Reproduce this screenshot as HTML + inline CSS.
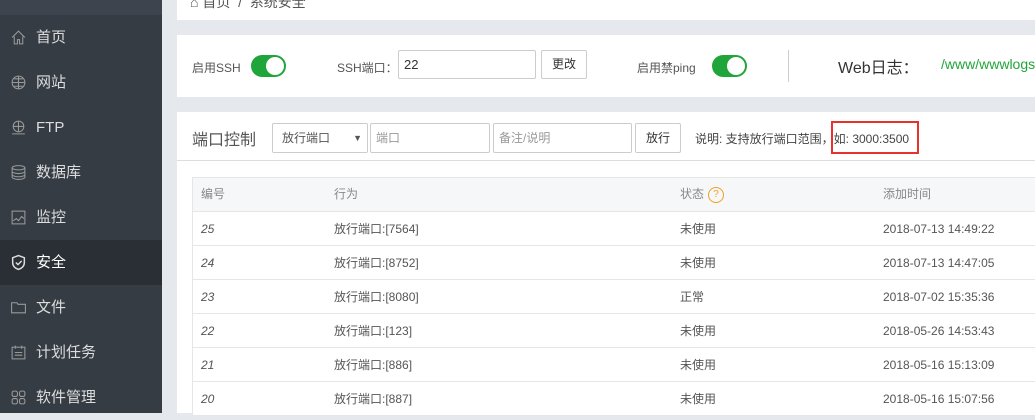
<!DOCTYPE html>
<html><head><meta charset="utf-8"><style>
*{margin:0;padding:0;box-sizing:border-box}
body{width:1035px;height:413px;overflow:hidden;background:#e5e8ec;font-family:"Liberation Sans","Noto Sans CJK SC",sans-serif;position:relative;color:#333}
.abs{position:absolute}
#side{left:0;top:0;width:162px;height:413px;background:#353c44}
.item{position:absolute;left:0;width:162px;height:45px;color:#ddd;font-size:15px;line-height:45px;padding-left:36px}
.item svg{position:absolute;left:10px;top:14px}
.white{background:#fff}
.tog{position:absolute;width:35px;height:22px;border-radius:11px;background:#20a53a}
.tog::after{content:"";position:absolute;right:2px;top:2px;width:18px;height:18px;border-radius:50%;background:#fff}
.inp{position:absolute;border:1px solid #ccc;border-radius:2px;background:#fff;font-size:12px;color:#999;padding-left:5px}
.btn{position:absolute;border:1px solid #ccc;border-radius:2px;background:#fff;font-size:12px;color:#333;text-align:center}
.t{position:absolute;font-size:12px;white-space:nowrap}
.row{position:absolute;left:192px;width:843px;height:34px;border-bottom:1px solid #e6e6e6;background:#fff;font-size:12px;line-height:34px;color:#555}
.row span{position:absolute}
</style></head><body>
<div id="side" class="abs">
<div class="abs" style="left:0;top:0;width:162px;height:15px;background:#3d444d"></div>
<div class="item" style="top:15px">首页<svg width="17" height="17" viewBox="0 0 16 16" fill="none" stroke="#999"><path d="M2 8L8 2l6 6M4 7v7h3v-4h2v4h3V7"/></svg></div>
<div class="item" style="top:60px">网站<svg width="17" height="17" viewBox="0 0 16 16" fill="none" stroke="#999"><circle cx="8" cy="8" r="6"/><path d="M2 8h12M8 2v12M4 4.5h8M4 11.5h8"/></svg></div>
<div class="item" style="top:105px">FTP<svg width="17" height="17" viewBox="0 0 16 16" fill="none" stroke="#999"><circle cx="8" cy="7" r="5"/><path d="M3 7h10M8 2v10M2 14h12"/></svg></div>
<div class="item" style="top:150px">数据库<svg width="17" height="17" viewBox="0 0 16 16" fill="none" stroke="#999"><ellipse cx="8" cy="3.5" rx="6" ry="2"/><path d="M2 3.5v9c0 1 3 2 6 2s6-1 6-2v-9M2 7c0 1 3 2 6 2s6-1 6-2M2 10c0 1 3 2 6 2s6-1 6-2"/></svg></div>
<div class="item" style="top:195px">监控<svg width="17" height="17" viewBox="0 0 16 16" fill="none" stroke="#999"><rect x="2" y="2" width="12" height="12"/><path d="M3 11l3-2 2 2 3-4 2 2"/></svg></div>
<div class="item" style="top:240px;background:#2a2f35;color:#fff">安全<svg width="17" height="17" viewBox="0 0 16 16" fill="none" stroke="#ddd" stroke-width="1.4"><path d="M8 1.5l5.5 2v4.5c0 3.5-2.5 5.5-5.5 6.5-3-1-5.5-3-5.5-6.5V3.5z"/><path d="M5.5 8l2 2 3.5-3.5"/></svg></div>
<div class="item" style="top:285px">文件<svg width="17" height="17" viewBox="0 0 16 16" fill="none" stroke="#999"><path d="M1.5 3.5h5l1 1.5h7v8h-13z"/></svg></div>
<div class="item" style="top:330px">计划任务<svg width="17" height="17" viewBox="0 0 16 16" fill="none" stroke="#999"><rect x="2" y="3" width="12" height="11"/><path d="M5 1.5v3M11 1.5v3M4.5 8h7M4.5 10.5h7"/></svg></div>
<div class="item" style="top:375px">软件管理<svg width="17" height="17" viewBox="0 0 16 16" fill="none" stroke="#999"><rect x="2" y="2" width="5" height="5" rx="1.5"/><rect x="9" y="2" width="5" height="5" rx="1.5"/><rect x="2" y="9" width="5" height="5" rx="1.5"/><rect x="9" y="9" width="5" height="5" rx="1.5"/></svg></div>
</div>

<div class="abs white" style="left:177px;top:0;width:858px;height:20px"></div>
<div class="t" style="left:190px;top:-8px;font-size:14px;color:#555">⌂ 首页 &nbsp;/&nbsp; 系统安全</div>

<div class="abs white" style="left:177px;top:35px;width:858px;height:62px"></div>
<div class="t" style="left:192px;top:59px;color:#555">启用SSH</div>
<div class="tog" style="left:251px;top:55px"></div>
<div class="t" style="left:337px;top:59px;color:#555">SSH端口：</div>
<div class="inp" style="left:398px;top:50px;width:138px;height:29px;line-height:27px;color:#333;font-size:13px">22</div>
<div class="btn" style="left:541px;top:50px;width:46px;height:29px;line-height:27px">更改</div>
<div class="t" style="left:637px;top:59px;color:#555">启用禁ping</div>
<div class="tog" style="left:712px;top:55px"></div>
<div class="abs" style="left:788px;top:50px;width:1px;height:32px;background:#ccc"></div>
<div class="t" style="left:838px;top:54px;font-size:16px;color:#333">Web日志：</div>
<div class="t" style="left:941px;top:56px;font-size:14px;color:#20a53a">/www/wwwlogs</div>

<div class="abs white" style="left:177px;top:112px;width:858px;height:301px"></div>
<div class="t" style="left:192px;top:126px;font-size:16px;color:#555">端口控制</div>
<div class="inp" style="left:272px;top:123px;width:96px;height:30px;line-height:28px;color:#555;padding-left:9px">放行端口<span style="position:absolute;right:5px;font-size:9px;color:#555">▼</span></div>
<div class="inp" style="left:370px;top:123px;width:120px;height:30px;line-height:28px">端口</div>
<div class="inp" style="left:493px;top:123px;width:139px;height:30px;line-height:28px">备注/说明</div>
<div class="btn" style="left:635px;top:123px;width:46px;height:30px;line-height:28px">放行</div>
<div class="t" style="left:695px;top:130px;color:#444">说明: 支持放行端口范围，如: 3000:3500</div>
<div class="abs" style="left:831px;top:121px;width:88px;height:33px;border:2px solid #e8302d"></div>
<div class="abs" style="left:177px;top:160px;width:858px;height:1px;background:#ddd"></div>

<div class="row" style="top:177px;height:35px;background:#f6f7f9;border-top:1px solid #e6e6e6;border-left:1px solid #e6e6e6;color:#888;line-height:33px">
<span style="left:8px">编号</span><span style="left:141px">行为</span><span style="left:487px">状态</span><span style="left:515px;top:9px;width:16px;height:16px;border:1.5px solid #f0a020;border-radius:50%;color:#f0a020;font-size:10px;line-height:13px;text-align:center">?</span><span style="left:690px">添加时间</span></div>
<div class="row" style="top:212px;border-left:1px solid #e6e6e6"><span style="left:8px;font-style:italic">25</span><span style="left:141px">放行端口:[7564]</span><span style="left:487px">未使用</span><span style="left:690px">2018-07-13 14:49:22</span></div>
<div class="row" style="top:246px;border-left:1px solid #e6e6e6"><span style="left:8px;font-style:italic">24</span><span style="left:141px">放行端口:[8752]</span><span style="left:487px">未使用</span><span style="left:690px">2018-07-13 14:47:05</span></div>
<div class="row" style="top:280px;border-left:1px solid #e6e6e6"><span style="left:8px;font-style:italic">23</span><span style="left:141px">放行端口:[8080]</span><span style="left:487px">正常</span><span style="left:690px">2018-07-02 15:35:36</span></div>
<div class="row" style="top:314px;border-left:1px solid #e6e6e6"><span style="left:8px;font-style:italic">22</span><span style="left:141px">放行端口:[123]</span><span style="left:487px">未使用</span><span style="left:690px">2018-05-26 14:53:43</span></div>
<div class="row" style="top:348px;border-left:1px solid #e6e6e6"><span style="left:8px;font-style:italic">21</span><span style="left:141px">放行端口:[886]</span><span style="left:487px">未使用</span><span style="left:690px">2018-05-16 15:13:09</span></div>
<div class="row" style="top:382px;border-left:1px solid #e6e6e6"><span style="left:8px;font-style:italic">20</span><span style="left:141px">放行端口:[887]</span><span style="left:487px">未使用</span><span style="left:690px">2018-05-16 15:07:56</span></div>
</body></html>
